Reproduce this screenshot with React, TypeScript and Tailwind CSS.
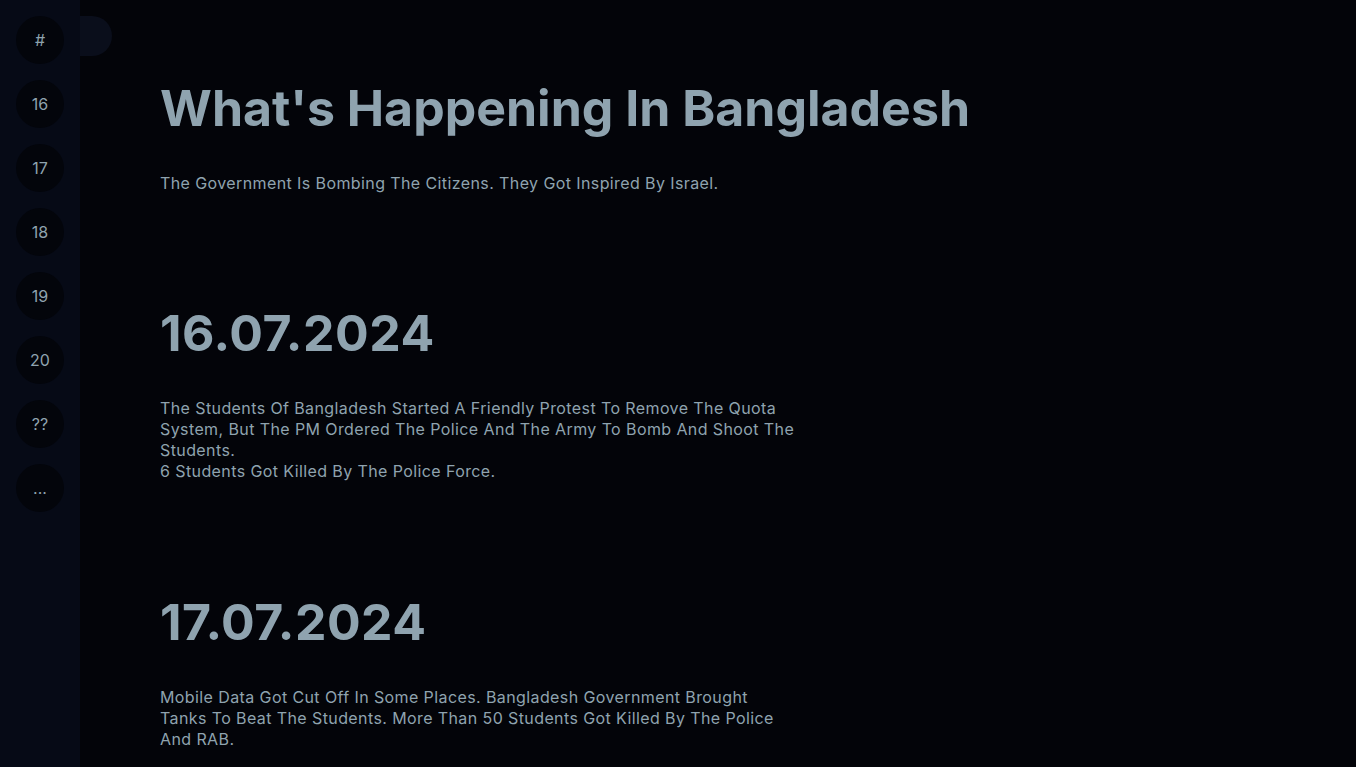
import React from "react";

const navItems = ["#", "16", "17", "18", "19", "20", "??", "..."];

export default function App() {
  return (
    <div
      className="flex min-h-screen bg-[#030409] text-[#8fa3af]"
      style={{ fontFamily: "Inter, 'Noto Sans', sans-serif" }}
    >
      <aside className="relative w-[80px] shrink-0 bg-[#060a16] min-h-screen">
        <div className="flex flex-col items-center gap-4 pt-4">
          {navItems.map((n) => (
            <div
              key={n}
              className="w-12 h-12 rounded-full bg-[#03050b] flex items-center justify-center text-base text-[#8fa3af]"
            >
              {n}
            </div>
          ))}
        </div>
        <div className="absolute left-[80px] top-4 w-8 h-10 rounded-r-full bg-[#0a0e1b]" />
      </aside>
      <main className="flex-1 pl-[80px] pt-[83px]">
        <section>
          <h1 className="text-[50px] font-bold leading-none">What's Happening In Bangladesh</h1>
          <p className="mt-[38px] text-base tracking-[0.4px]">
            The Government Is Bombing The Citizens. They Got Inspired By Israel.
          </p>
        </section>
        <section className="mt-[113px]">
          <h2 className="text-[50px] font-bold leading-none tracking-[0.5px]">16.07.2024</h2>
          <p className="mt-[40px] text-base leading-[21px] tracking-[0.4px] max-w-[636px]">
            The Students Of Bangladesh Started A Friendly Protest To Remove The Quota System, But The PM Ordered The
            Police And The Army To Bomb And Shoot The Students.
            <br />6 Students Got Killed By The Police Force.
          </p>
        </section>
        <section className="mt-[115px]">
          <h2 className="text-[50px] font-bold leading-none tracking-[0.5px]">17.07.2024</h2>
          <p className="mt-[40px] text-base leading-[21px] tracking-[0.4px] max-w-[636px]">
            Mobile Data Got Cut Off In Some Places. Bangladesh Government Brought Tanks To Beat The Students. More Than
            50 Students Got Killed By The Police And RAB.
          </p>
        </section>
      </main>
    </div>
  );
}
